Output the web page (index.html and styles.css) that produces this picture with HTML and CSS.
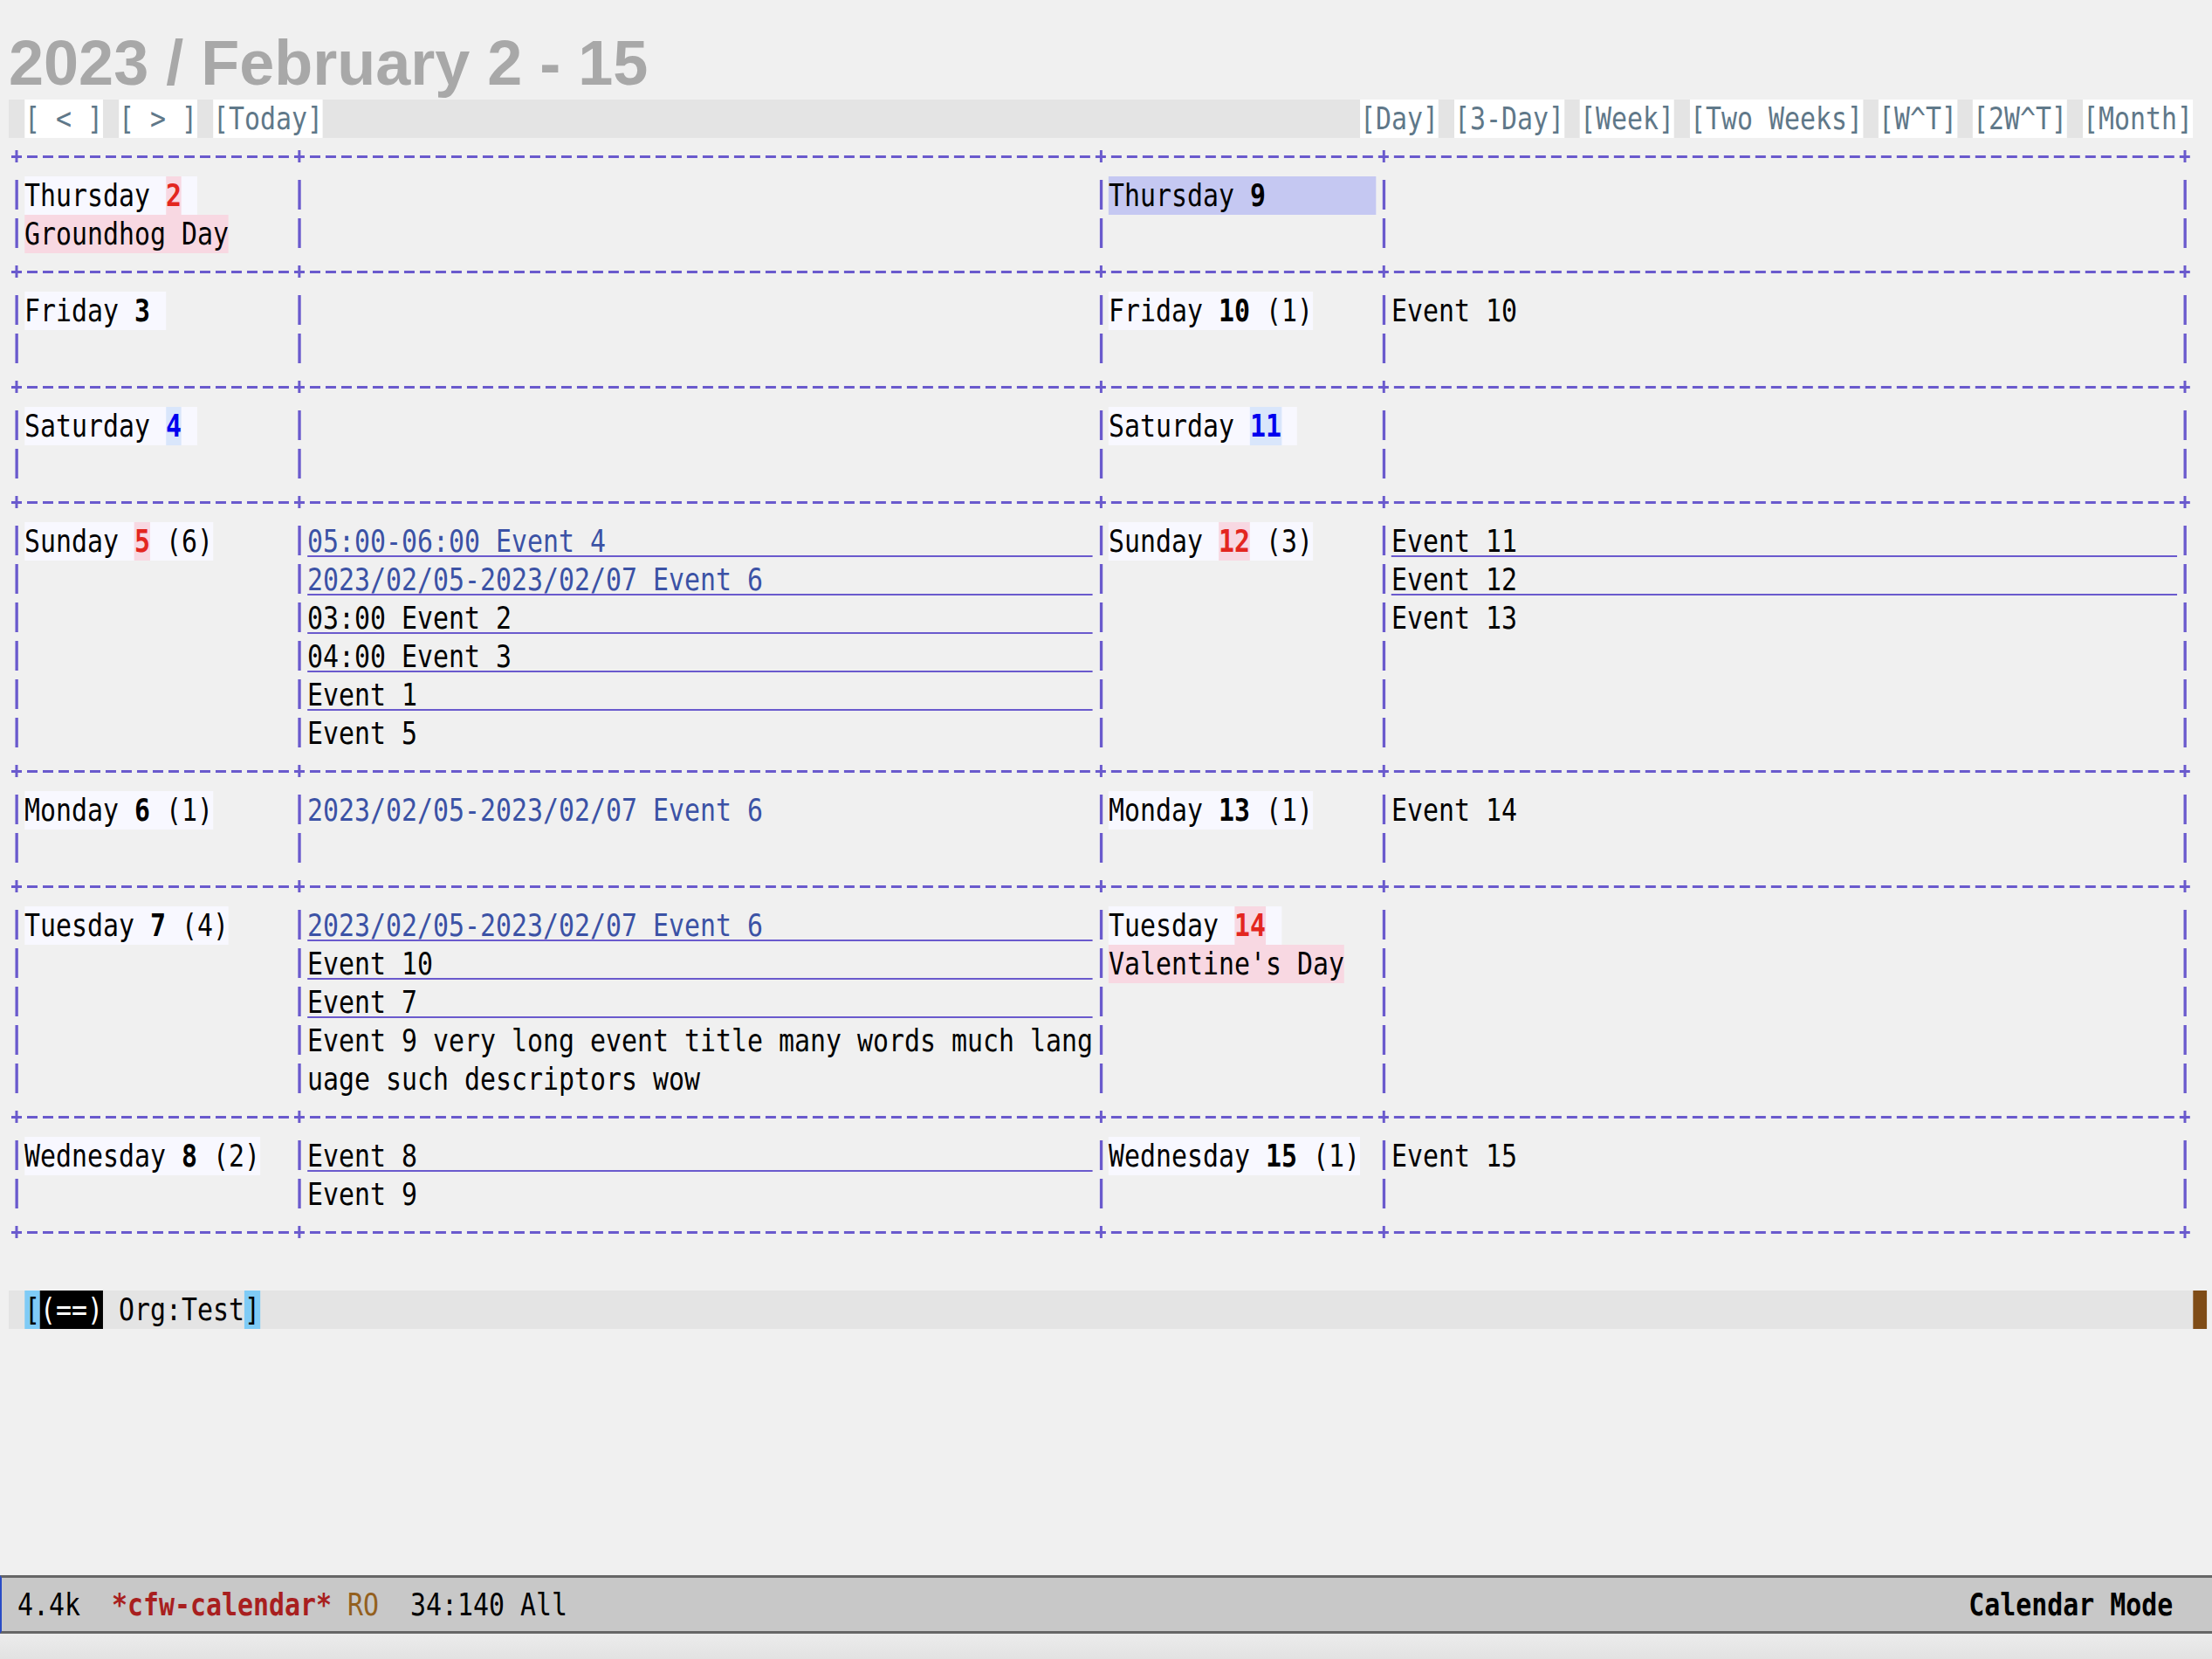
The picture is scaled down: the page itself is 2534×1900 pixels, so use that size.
FILE: index.html
```html
<!DOCTYPE html>
<html lang="en">
<head>
<meta charset="utf-8">
<title>cfw-calendar</title>
<link rel="stylesheet" href="styles.css">
</head>
<body>
<div class="frame">
  <h1 class="title">2023 / February 2 - 15</h1>
  <div class="buffer">
    <div class="nav">
      <div class="nav-group left"><span class="btn">[ &lt; ]</span><span class="btn">[ &gt; ]</span><span class="btn">[Today]</span></div>
      <div class="nav-group"><span class="btn">[Day]</span><span class="btn">[3-Day]</span><span class="btn">[Week]</span><span class="btn">[Two Weeks]</span><span class="btn">[W^T]</span><span class="btn">[2W^T]</span><span class="btn">[Month]</span></div>
    </div>

    <div class="week">
      <div class="bar"></div>
      <div class="cell">
        <div class="ln"><span class="hd">Thursday <b class="num sun">2</b> </span></div>
        <div class="ln"><span class="holiday">Groundhog Day</span></div>
      </div>
      <div class="bar"></div>
      <div class="cell"></div>
      <div class="bar"></div>
      <div class="cell">
        <div class="ln today">Thursday <b class="num">9</b></div>
        <div class="ln"></div>
      </div>
      <div class="bar"></div>
      <div class="cell"></div>
      <div class="bar"></div>
    </div>

    <div class="week">
      <div class="bar"></div>
      <div class="cell">
        <div class="ln"><span class="hd">Friday <b class="num">3</b> </span></div>
        <div class="ln"></div>
      </div>
      <div class="bar"></div>
      <div class="cell"></div>
      <div class="bar"></div>
      <div class="cell">
        <div class="ln"><span class="hd">Friday <b class="num">10</b> (1)</span></div>
      </div>
      <div class="bar"></div>
      <div class="cell">
        <div class="ln">Event 10</div>
      </div>
      <div class="bar"></div>
    </div>

    <div class="week">
      <div class="bar"></div>
      <div class="cell">
        <div class="ln"><span class="hd">Saturday <b class="num sat">4</b> </span></div>
        <div class="ln"></div>
      </div>
      <div class="bar"></div>
      <div class="cell"></div>
      <div class="bar"></div>
      <div class="cell">
        <div class="ln"><span class="hd">Saturday <b class="num sat">11</b> </span></div>
      </div>
      <div class="bar"></div>
      <div class="cell"></div>
      <div class="bar"></div>
    </div>

    <div class="week">
      <div class="bar"></div>
      <div class="cell">
        <div class="ln"><span class="hd">Sunday <b class="num sun">5</b> (6)</span></div>
      </div>
      <div class="bar"></div>
      <div class="cell">
        <div class="ln u blue">05:00-06:00 Event 4</div>
        <div class="ln u blue">2023/02/05-2023/02/07 Event 6</div>
        <div class="ln u">03:00 Event 2</div>
        <div class="ln u">04:00 Event 3</div>
        <div class="ln u">Event 1</div>
        <div class="ln">Event 5</div>
      </div>
      <div class="bar"></div>
      <div class="cell">
        <div class="ln"><span class="hd">Sunday <b class="num sun">12</b> (3)</span></div>
      </div>
      <div class="bar"></div>
      <div class="cell">
        <div class="ln u">Event 11</div>
        <div class="ln u">Event 12</div>
        <div class="ln">Event 13</div>
      </div>
      <div class="bar"></div>
    </div>

    <div class="week">
      <div class="bar"></div>
      <div class="cell">
        <div class="ln"><span class="hd">Monday <b class="num">6</b> (1)</span></div>
        <div class="ln"></div>
      </div>
      <div class="bar"></div>
      <div class="cell">
        <div class="ln blue">2023/02/05-2023/02/07 Event 6</div>
      </div>
      <div class="bar"></div>
      <div class="cell">
        <div class="ln"><span class="hd">Monday <b class="num">13</b> (1)</span></div>
      </div>
      <div class="bar"></div>
      <div class="cell">
        <div class="ln">Event 14</div>
      </div>
      <div class="bar"></div>
    </div>

    <div class="week">
      <div class="bar"></div>
      <div class="cell">
        <div class="ln"><span class="hd">Tuesday <b class="num">7</b> (4)</span></div>
      </div>
      <div class="bar"></div>
      <div class="cell">
        <div class="ln u blue">2023/02/05-2023/02/07 Event 6</div>
        <div class="ln u">Event 10</div>
        <div class="ln u">Event 7</div>
        <div class="ln">Event 9 very long event title many words much lang</div>
        <div class="ln">uage such descriptors wow</div>
      </div>
      <div class="bar"></div>
      <div class="cell">
        <div class="ln"><span class="hd">Tuesday <b class="num sun">14</b> </span></div>
        <div class="ln"><span class="holiday">Valentine's Day</span></div>
      </div>
      <div class="bar"></div>
      <div class="cell"></div>
      <div class="bar"></div>
    </div>

    <div class="week">
      <div class="bar"></div>
      <div class="cell">
        <div class="ln"><span class="hd">Wednesday <b class="num">8</b> (2)</span></div>
        <div class="ln"></div>
      </div>
      <div class="bar"></div>
      <div class="cell">
        <div class="ln u">Event 8</div>
        <div class="ln">Event 9</div>
      </div>
      <div class="bar"></div>
      <div class="cell">
        <div class="ln"><span class="hd">Wednesday <b class="num">15</b> (1)</span></div>
      </div>
      <div class="bar"></div>
      <div class="cell">
        <div class="ln">Event 15</div>
      </div>
      <div class="bar"></div>
    </div>

    <div class="sep"></div>

    <div class="org">
      <div class="org-bar"> <span class="brk">[</span><span class="modeind">(==)</span> Org:Test<span class="brk">]</span></div>
      <div class="cursor"></div>
    </div>
  </div>

  <div class="spacer"></div>

  <div class="modeline">
    <div class="ml">
      <span class="ml-left">4.4k  <b class="bufname">*cfw-calendar*</b> <span class="ro">RO</span>  34:140 All</span>
      <b class="ml-right">Calendar Mode</b>
    </div>
  </div>
  <div class="echo"></div>
</div>
</body>
</html>
```

FILE: styles.css
```css
:root {
  --line: #6a5acd;
  --bg: #f0f0f0;
}

html, body {
  margin: 0;
  padding: 0;
  overflow: hidden;
  background: var(--bg);
}

.frame {
  height: 100vh;
  display: flex;
  flex-direction: column;
  overflow: hidden;
}

.title {
  margin: 0;
  height: 114px;
  box-sizing: border-box;
  padding: 36px 0 0 10px;
  font: bold 72px/72px "Liberation Sans", Arial, sans-serif;
  color: #a8a8a8;
  white-space: nowrap;
}

/* text buffer: DejaVu Sans Mono, condensed so one column = 18px */
.buffer {
  align-self: flex-start;
  flex: none;
  margin-left: 10px;
  width: 139ch;
  font: 36px/44px "DejaVu Sans Mono", "Liberation Mono", monospace;
  color: #000;
  transform: scaleX(0.8305);
  transform-origin: 0 0;
}

.nav {
  display: flex;
  justify-content: space-between;
  height: 44px;
  background: #e4e4e4;
  color: #5f7889;
}

.nav-group {
  display: flex;
  gap: 1ch;
}

.nav-group.left {
  padding-left: 1ch;
}

.btn {
  background: #fff;
  white-space: pre;
}

/* week rows: top 44px is the dashed separator */
.week,
.sep {
  background-image:
    linear-gradient(var(--line), var(--line)),
    linear-gradient(var(--line), var(--line)),
    linear-gradient(var(--line), var(--line)),
    linear-gradient(var(--line), var(--line)),
    linear-gradient(var(--line), var(--line)),
    linear-gradient(90deg, transparent 16.67%, var(--line) 16.67%, var(--line) 83.33%, transparent 83.33%);
  background-size: 3.6px 14px, 3.6px 14px, 3.6px 14px, 3.6px 14px, 3.6px 14px, 1ch 3px;
  background-position:
    calc(0.5ch - 1.8px) 14px,
    calc(18.5ch - 1.8px) 14px,
    calc(69.5ch - 1.8px) 14px,
    calc(87.5ch - 1.8px) 14px,
    calc(138.5ch - 1.8px) 14px,
    0 20px;
  background-repeat: no-repeat, no-repeat, no-repeat, no-repeat, no-repeat, repeat-x;
}

.week {
  display: grid;
  grid-template-columns: 1ch 17ch 1ch 50ch 1ch 17ch 1ch 50ch 1ch;
  padding-top: 44px;
}

.sep {
  height: 44px;
}

.bar {
  background-image: linear-gradient(to bottom, transparent 4px, var(--line) 4px, var(--line) 38px, transparent 38px);
  background-size: 3.6px 44px;
  background-position: center 0;
  background-repeat: repeat-y;
}

.cell {
  min-width: 0;
}

.ln {
  height: 44px;
  white-space: pre;
}

.hd {
  display: inline-block;
  height: 44px;
  background: #f8f8ff;
}

.num {
  display: inline-block;
  height: 44px;
  font-weight: bold;
}

.sun {
  color: #e3261f;
  background: #f8d8e2;
}

.sat {
  color: #0000ee;
  background: #d9e6fb;
}

.holiday {
  display: inline-block;
  height: 44px;
  background: #f8d8e2;
}

.today {
  background: #c5c8f2;
}

.u {
  background-image: linear-gradient(var(--line), var(--line));
  background-size: 100% 2px;
  background-position: 0 38px;
  background-repeat: no-repeat;
}

.blue {
  color: #3b52a5;
}

/* org line */
.org {
  display: flex;
  margin-top: 44px;
  height: 44px;
}

.org-bar {
  flex: none;
  width: 139ch;
  background: #e4e4e4;
  white-space: pre;
}

.brk {
  display: inline-block;
  height: 44px;
  background: #7fcbf6;
}

.modeind {
  display: inline-block;
  height: 44px;
  background: #000;
  color: #fff;
}

.cursor {
  flex: none;
  width: 19.3px;
  background: #7f4c17;
}

.spacer {
  flex: 1;
}

/* mode line */
.modeline {
  flex: none;
  height: 61px;
  background: #c8c8c8;
  border-top: 3px solid #666;
  border-bottom: 3px solid #666;
  border-left: 2px solid #2a4cc6;
  overflow: visible;
}

.ml {
  width: 3049px;
  box-sizing: border-box;
  display: flex;
  justify-content: space-between;
  padding: 0 2.5ch 0 1ch;
  font: 36px/61px "DejaVu Sans Mono", "Liberation Mono", monospace;
  color: #000;
  transform: scaleX(0.8305);
  transform-origin: 0 0;
}

.ml-left {
  white-space: pre;
}

.bufname {
  color: #a81f1f;
}

.ro {
  color: #93601e;
}

.ml-right {
  white-space: pre;
}

.echo {
  flex: none;
  height: 29px;
  background: linear-gradient(#ececec, #e2e2e2);
}
```
